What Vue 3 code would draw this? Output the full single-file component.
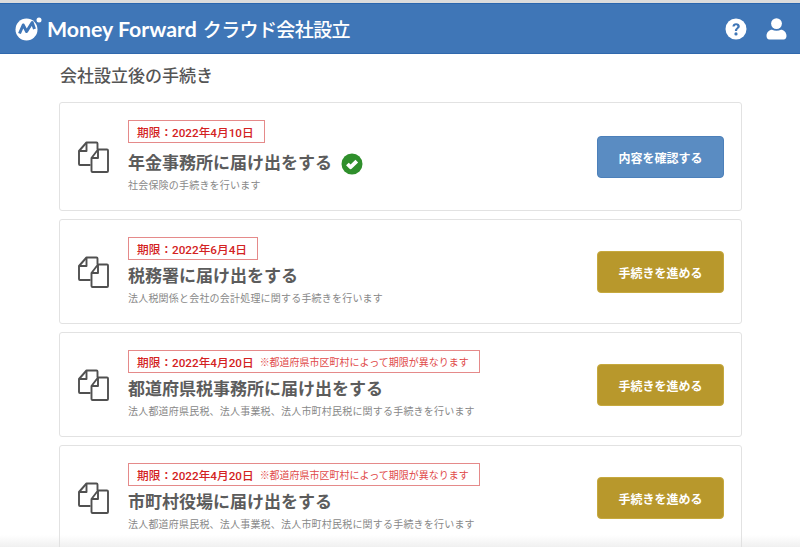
<script setup>
const steps = [
  { limit: '期限：2022年4月10日', note: '', title: '年金事務所に届け出をする', desc: '社会保険の手続きを行います', done: true, action: '内容を確認する' },
  { limit: '期限：2022年6月4日', note: '', title: '税務署に届け出をする', desc: '法人税関係と会社の会計処理に関する手続きを行います', done: false, action: '手続きを進める' },
  { limit: '期限：2022年4月20日', note: '※都道府県市区町村によって期限が異なります', title: '都道府県税事務所に届け出をする', desc: '法人都道府県民税、法人事業税、法人市町村民税に関する手続きを行います', done: false, action: '手続きを進める' },
  { limit: '期限：2022年4月20日', note: '※都道府県市区町村によって期限が異なります', title: '市町村役場に届け出をする', desc: '法人都道府県民税、法人事業税、法人市町村民税に関する手続きを行います', done: false, action: '手続きを進める' },
]
</script>

<template>
  <div class="page">
    <header class="bar">
      <div class="brand">
        <svg class="mark" width="29" height="26" viewBox="0 0 29 26">
          <circle cx="11.5" cy="13.5" r="11" fill="#fff" />
          <circle cx="24" cy="4" r="2.5" fill="#fff" />
          <path d="M4.5 17.5 L8.2 9 L11.6 15.5 L17.2 6.5 L19.5 13" fill="none" stroke="#3f76b7" stroke-width="3" stroke-linejoin="round" />
        </svg>
        <span class="word">Money Forward</span>
        <span class="product">クラウド会社設立</span>
      </div>
      <div class="tools">
        <svg width="22" height="22" viewBox="0 0 22 22">
          <circle cx="11" cy="11" r="10.5" fill="#fff" />
          <path d="M7.4 8.6 C7.5 6.4 9.1 5.2 11.1 5.2 C13.2 5.2 14.8 6.4 14.8 8.3 C14.8 10.6 12.1 10.7 12.1 13 L9.9 13 C9.9 9.9 12.4 9.8 12.4 8.4 C12.4 7.7 11.8 7.2 11 7.2 C10.2 7.2 9.7 7.8 9.6 8.6 Z" fill="#3f76b7" />
          <circle cx="11" cy="15.9" r="1.6" fill="#3f76b7" />
        </svg>
        <svg width="21" height="22" viewBox="0 0 21 22">
          <circle cx="10.5" cy="5.6" r="5.4" fill="#fff" />
          <path d="M0.5 18 C0.5 14.2 3.4 11.8 6 11.8 C8.6 13 12.4 13 15 11.8 C17.6 11.8 20.5 14.2 20.5 18 C20.5 20 19.4 21.4 17.6 21.4 L3.4 21.4 C1.6 21.4 0.5 20 0.5 18 Z" fill="#fff" />
        </svg>
      </div>
    </header>

    <main class="content">
      <h1 class="heading">会社設立後の手続き</h1>
      <section v-for="s in steps" :key="s.title" class="card" :class="{ tall: s.done }">
        <svg class="doc" width="32" height="32" viewBox="0 0 32 32" fill="none" stroke="#505050" stroke-width="1.9" stroke-linejoin="round">
          <path d="M13.5 24 H3 Q2 24 2 23 V10 L9.5 1.5 H19.5 Q20.5 1.5 20.5 2.5 V8.5" />
          <path d="M2 10 H9.5 V1.5" />
          <path d="M14.5 17 L21 8.5 H30 Q31 8.5 31 9.5 V30 Q31 31 30 31 H15.5 Q14.5 31 14.5 30 Z" />
          <path d="M14.5 17 H21 V8.5" />
        </svg>
        <div class="body">
          <div class="limit">
            <span class="date">{{ s.limit }}</span>
            <span v-if="s.note" class="note">{{ s.note }}</span>
          </div>
          <h2 class="title">
            {{ s.title }}
            <svg v-if="s.done" class="check" width="22" height="22" viewBox="0 0 22 22">
              <circle cx="11" cy="11" r="10.5" fill="#2f8f2c" />
              <path d="M6.4 11 L9.6 14.2 L15.8 8.2" fill="none" stroke="#fff" stroke-width="3.8" stroke-linejoin="round" />
            </svg>
          </h2>
          <p class="desc">{{ s.desc }}</p>
        </div>
        <button class="action" :class="{ blue: s.done }">{{ s.action }}</button>
      </section>
    </main>
    <div class="fade"></div>
  </div>
</template>

<style>
html, body { margin: 0; background: #fff; }
</style>

<style scoped>
.page {
  position: relative;
  height: 547px;
  overflow: hidden;
  box-sizing: border-box;
  border-top: 3px solid #dcdcdc;
  background: #fff;
  font-family: "Liberation Sans", "Noto Sans CJK JP", sans-serif;
  color: #555;
}
.fade {
  position: absolute;
  left: 0;
  right: 0;
  bottom: 0;
  height: 12px;
  background: linear-gradient(rgba(225, 225, 225, 0), rgba(225, 225, 225, 0.5));
  pointer-events: none;
}
.bar {
  height: 51px;
  box-sizing: border-box;
  background: #3f76b7;
  border-top: 1px solid #2a66ae;
  border-bottom: 1px solid #2f68ad;
  display: flex;
  align-items: center;
  justify-content: space-between;
  padding: 0 13px 0 15px;
}
.brand { display: flex; align-items: center; color: #fff; }
.mark { margin-right: 3px; }
.word {
  font-family: Lato, sans-serif;
  font-weight: 700;
  font-size: 21.3px;
  margin-right: 6px;
}
.product { font-size: 19px; font-weight: 500; letter-spacing: -0.6px; }
.tools { display: flex; align-items: center; gap: 19px; }
.content { padding: 0 58px 0 59px; }
.heading {
  margin: 0;
  height: 48px;
  padding: 13px 0 0 1px;
  box-sizing: border-box;
  font-size: 17px;
  line-height: 20px;
  font-weight: 500;
  color: #555;
}
.card {
  box-sizing: border-box;
  height: 105px;
  margin-bottom: 8px;
  border: 1px solid #e2e2e2;
  border-radius: 3px;
  display: flex;
  align-items: center;
  padding: 0 17px 0 17px;
}
.card.tall { height: 109px; }
.doc { margin: 0 19px 0 0; flex: none; }
.body { flex: 1; min-width: 0; }
.limit {
  display: inline-flex;
  align-items: center;
  height: 23px;
  box-sizing: border-box;
  border: 1px solid #e58a8a;
  padding: 0 10px 0 8px;
  color: #d32222;
}
.date {
  font-family: Roboto, "Noto Sans CJK JP", sans-serif;
  font-size: 11.7px;
  font-weight: 500;
}
.note { font-size: 10px; margin-left: 6px; color: #df4a4a; }
.title {
  margin: 5px 0 0;
  font-size: 17px;
  line-height: 24px;
  font-weight: 600;
  color: #5c5c5c;
  display: flex;
  align-items: center;
  gap: 9px;
}
.tall .title { margin-top: 9px; }
.desc {
  margin: 3px 0 0;
  font-size: 10px;
  line-height: 14px;
  letter-spacing: 0.2px;
  color: #888;
}
.action {
  flex: none;
  width: 127px;
  height: 42px;
  margin-top: 1px;
  border: 1px solid #c6a93e;
  border-radius: 4px;
  background: #b8982c;
  color: #fff;
  font-family: inherit;
  font-size: 12px;
  font-weight: 700;
}
.action.blue { background: #5a8cc2; border-color: #4c80ba; }
</style>
